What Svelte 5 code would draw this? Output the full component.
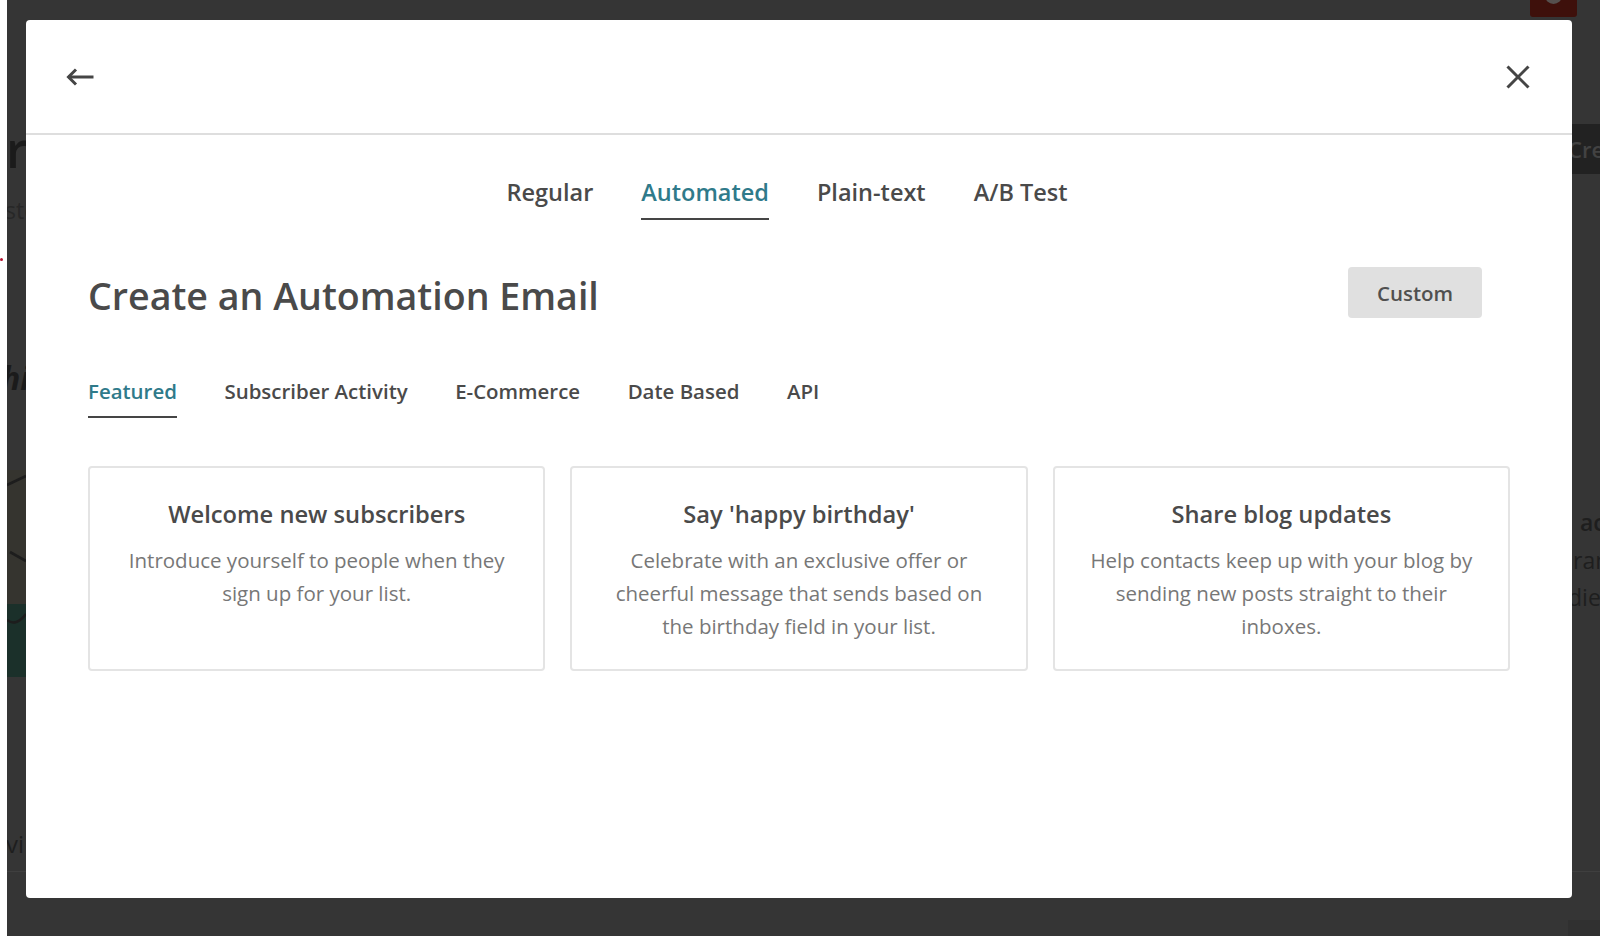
<script>
	const mainTabs = ['Regular', 'Automated', 'Plain-text', 'A/B Test'];
	const subTabs = ['Featured', 'Subscriber Activity', 'E-Commerce', 'Date Based', 'API'];
	const cards = [
		{ title: 'Welcome new subscribers', text: 'Introduce yourself to people when they sign up for your list.' },
		{ title: "Say 'happy birthday'", text: 'Celebrate with an exclusive offer or cheerful message that sends based on the birthday field in your list.' },
		{ title: 'Share blog updates', text: 'Help contacts keep up with your blog by sending new posts straight to their inboxes.' }
	];
	let mainTab = $state('Automated');
	let subTab = $state('Featured');
</script>

<div class="page">
	<!-- dimmed page behind the modal -->
	<div class="behind">
		<span class="frag big">r</span>
		<span class="frag sto">sto</span>
		<span class="frag hi">hi</span>
		<span class="frag vi">vi</span>
		<span class="frag ac">ac</span>
		<span class="frag ran">ran</span>
		<span class="frag die">die</span>
		<div class="create"><span>Cre</span></div>
		<div class="red"></div>
		<div class="redknob"></div>
		<div class="rule-left"></div>
		<div class="rule-right"></div>
		<div class="tile-left"></div>
		<div class="tile-green"></div>
		<div class="tile-br"></div>
		<svg class="doodle" width="19" height="190" viewBox="0 0 19 190" fill="none" stroke="#1d1d1d" stroke-width="2.6">
			<path d="M0 20 L19 11" />
			<path d="M3 87 L19 96" />
			<path d="M0 155 Q9 162 19 149" />
		</svg>
	</div>
	<i class="reddot"></i>

	<div class="modal">
		<header>
			<button class="icon" aria-label="Back">
				<svg width="28" height="20" viewBox="0 0 28 20" fill="none" stroke="#454545" stroke-width="3">
					<path d="M2 10 H27.5" />
					<path d="M10 2.5 L2.5 10 L10 17.5" />
				</svg>
			</button>
			<button class="icon" aria-label="Close">
				<svg width="24" height="24" viewBox="0 0 24 24" fill="none" stroke="#454545" stroke-width="3">
					<path d="M1.5 1.5 L22.5 22.5" />
					<path d="M22.5 1.5 L1.5 22.5" />
				</svg>
			</button>
		</header>

		<nav class="main-tabs">
			{#each mainTabs as tab}
				<button class:active={tab === mainTab} onclick={() => (mainTab = tab)}>{tab}</button>
			{/each}
		</nav>

		<div class="content">
			<div class="title-row">
				<h1>Create an Automation Email</h1>
				<button class="custom">Custom</button>
			</div>

			<nav class="sub-tabs">
				{#each subTabs as tab}
					<button class:active={tab === subTab} onclick={() => (subTab = tab)}>{tab}</button>
				{/each}
			</nav>

			<div class="cards">
				{#each cards as card}
					<div class="card">
						<h3>{card.title}</h3>
						<p>{card.text}</p>
					</div>
				{/each}
			</div>
		</div>
	</div>
</div>

<style>
	:global(body) {
		margin: 0;
		background: #fff;
	}
	.page {
		position: relative;
		width: 1600px;
		height: 936px;
		overflow: hidden;
		background: #fff;
		font-family: 'Open Sans', sans-serif;
	}
	.behind {
		position: absolute;
		left: 7px;
		top: 0;
		right: 0;
		bottom: 0;
		background: #353535;
		overflow: hidden;
	}
	.frag {
		position: absolute;
		color: #1e1e1e;
		font-size: 22px;
		line-height: 1;
		white-space: nowrap;
	}
	.big { left: -1px; top: 124px; font-size: 50px; font-weight: 600; color: #1b1b1b; }
	.sto { left: -2px; top: 199px; color: #272727; font-size: 23px; }
	.hi { left: -6px; top: 362px; font-size: 32px; font-weight: 700; font-style: italic; color: #1b1b1b; }
	.vi { left: -1px; top: 832px; font-size: 24px; color: #1e1e1e; }
	.ac { left: 1573px; top: 511px; font-size: 23px; font-weight: 600; }
	.ran { left: 1566px; top: 549px; font-size: 23px; }
	.die { left: 1561px; top: 586px; font-size: 23px; }
	.create {
		position: absolute;
		left: 1565px;
		top: 124px;
		right: 0;
		height: 50px;
		background: #222;
		color: #424242;
		font-size: 22px;
		font-weight: 600;
		line-height: 50px;
	}
	.create span { margin-left: -4px; }
	.red {
		position: absolute;
		left: 1523px;
		top: -6px;
		width: 47px;
		height: 23px;
		border-radius: 3px;
		background: #3e100b;
	}
	.redknob {
		position: absolute;
		left: 1538px;
		top: -13px;
		width: 17px;
		height: 17px;
		border-radius: 50%;
		background: #55504e;
	}
	.rule-left {
		position: absolute;
		left: 0;
		top: 871px;
		width: 20px;
		height: 1px;
		background: #3f3f3f;
	}
	.rule-right {
		position: absolute;
		left: 1565px;
		top: 871px;
		right: 0;
		height: 1px;
		background: #3f3f3f;
	}
	.tile-left {
		position: absolute;
		left: 0;
		top: 470px;
		width: 19px;
		height: 135px;
		background: #35342f;
	}
	.tile-green {
		position: absolute;
		left: 0;
		top: 604px;
		width: 19px;
		height: 73px;
		background: #1b302a;
	}
	.tile-br {
		position: absolute;
		left: 1561px;
		top: 920px;
		right: 0;
		bottom: 0;
		background: #303030;
	}
	.doodle {
		position: absolute;
		left: 0;
		top: 465px;
	}
	.reddot {
		position: absolute;
		left: 0;
		top: 258px;
		width: 3px;
		height: 3px;
		border-radius: 50%;
		background: #b5122f;
	}
	.modal {
		position: absolute;
		left: 26px;
		top: 20px;
		width: 1546px;
		height: 878px;
		background: #fff;
		border-radius: 4px;
		display: flex;
		flex-direction: column;
		color: #454545;
	}
	header {
		height: 115px;
		box-sizing: border-box;
		flex: none;
		padding: 0 42px 0 40px;
		border-bottom: 2px solid #dedede;
		display: flex;
		align-items: center;
		justify-content: space-between;
	}
	button {
		font: inherit;
		color: inherit;
		background: none;
		border: none;
		padding: 0;
		cursor: pointer;
	}
	.icon {
		display: flex;
		padding: 0;
	}
	.main-tabs {
		display: flex;
		justify-content: center;
		gap: 48px;
		margin-top: 34px;
		padding-right: 24px;
	}
	.main-tabs button {
		font-size: 23.5px;
		font-weight: 600;
		line-height: 34px;
		padding: 6px 0 9px;
		border-bottom: 2px solid transparent;
		color: #4a4a4a;
	}
	.main-tabs button.active,
	.sub-tabs button.active {
		color: #2f7a8a;
		border-bottom-color: #454545;
	}
	.content {
		padding: 0 62px;
	}
	.title-row {
		display: flex;
		justify-content: space-between;
		align-items: flex-start;
		margin-top: 47px;
	}
	h1 {
		margin: 0;
		font-size: 37.6px;
		font-weight: 600;
		line-height: 58px;
		color: #4a4a4a;
	}
	.custom {
		width: 134px;
		height: 51px;
		margin-right: 28px;
		background: #e0e0e0;
		border-radius: 4px;
		font-size: 20.5px;
		font-weight: 600;
		color: #505050;
	}
	.sub-tabs {
		display: flex;
		gap: 47.5px;
		margin-top: 45px;
	}
	.sub-tabs button {
		font-size: 20.45px;
		font-weight: 600;
		line-height: 30px;
		padding: 6px 0 10px;
		border-bottom: 2px solid transparent;
		color: #4a4a4a;
	}
	.cards {
		display: grid;
		grid-template-columns: repeat(3, 1fr);
		gap: 25px;
		margin-top: 48px;
	}
	.card {
		height: 205px;
		box-sizing: border-box;
		padding: 29px 34px 0;
		border: 2px solid #e4e4e4;
		border-radius: 4px;
		text-align: center;
	}
	h3 {
		margin: 0;
		font-size: 23.7px;
		font-weight: 600;
		line-height: 34px;
		color: #4a4a4a;
	}
	p {
		margin: 13px 0 0;
		font-size: 20.5px;
		line-height: 33px;
		color: #777;
	}
</style>
